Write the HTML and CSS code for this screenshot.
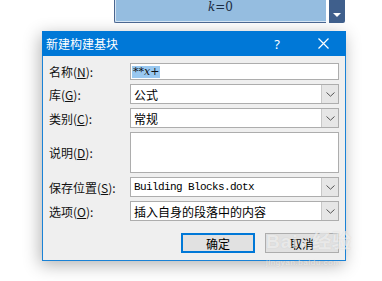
FILE: index.html
```html
<!DOCTYPE html>
<html lang="zh-CN">
<head>
    <meta charset="UTF-8">
    <meta name="viewport" content="width=device-width, initial-scale=1.0">
    <title>新建构建基块</title>
    <link rel="stylesheet" href="styles.css">
</head>
<body>
    <div class="eq">
        <div class="eq-body"><span class="eq-text"><i>k</i>=0</span></div>
        <div class="eq-btn"><span class="tri"></span></div>
    </div>

    <div class="dialog">
        <div class="title-bar">
            <span class="title">新建构建基块</span>
            <span class="title-btn help">?</span>
            <span class="title-btn close">
                <svg width="11" height="11" viewBox="0 0 11 11"><path d="M0.5 0.5L10.5 10.5M10.5 0.5L0.5 10.5" stroke="#fff" stroke-width="1.2" fill="none"/></svg>
            </span>
        </div>
        <div class="dialog-body">
            <div class="form">
                <label class="label">名称(<u>N</u>):</label>
                <div class="field text-field row-short"><span class="sel">**<i>x</i>+</span></div>

                <label class="label">库(<u>G</u>):</label>
                <div class="field combo"><span class="val">公式</span><span class="arrow"><svg width="9" height="5" viewBox="0 0 9 5"><path d="M0.5 0.5L4.5 4.2L8.5 0.5" stroke="#555" fill="none"/></svg></span></div>

                <label class="label">类别(<u>C</u>):</label>
                <div class="field combo"><span class="val">常规</span><span class="arrow"><svg width="9" height="5" viewBox="0 0 9 5"><path d="M0.5 0.5L4.5 4.2L8.5 0.5" stroke="#555" fill="none"/></svg></span></div>

                <label class="label">说明(<u>D</u>):</label>
                <div class="field text-field row-tall"></div>

                <label class="label">保存位置(<u>S</u>):</label>
                <div class="field combo"><span class="val mono">Building Blocks.dotx</span><span class="arrow"><svg width="9" height="5" viewBox="0 0 9 5"><path d="M0.5 0.5L4.5 4.2L8.5 0.5" stroke="#555" fill="none"/></svg></span></div>

                <label class="label">选项(<u>O</u>):</label>
                <div class="field combo"><span class="val">插入自身的段落中的内容</span><span class="arrow"><svg width="9" height="5" viewBox="0 0 9 5"><path d="M0.5 0.5L4.5 4.2L8.5 0.5" stroke="#555" fill="none"/></svg></span></div>
            </div>
            <div class="buttons">
                <button class="btn default">确定</button>
                <button class="btn">取消</button>
            </div>
        </div>
    </div>

    <div class="watermark">
        <span class="wm-logo">Bai<span class="paw">●</span>经验</span>
        <span class="wm-url">jingyan.baidu.com</span>
    </div>
</body>
</html>
```

FILE: styles.css
```css
/* Word "new building block" dialog */
body {
    margin: 0;
    width: 382px;
    height: 281px;
    overflow: hidden;
    background-color: #fff;
    font-family: "Noto Sans CJK SC", "Noto Sans", sans-serif;
    font-size: 12px;
    color: #000;
    position: relative;
}
.eq {
    display: flex;
    margin-left: 114px;
    width: 231px;
    height: 23px;
}
.eq-body {
    flex: 1;
    display: flex;
    justify-content: center;
    background-color: #95bde0;
    border-left: 1px solid #4a6690;
    border-bottom: 1px solid #4a6690;
    border-bottom-left-radius: 2px;
    box-shadow: inset 1px -1px 0 #d6e5f3;
}
.eq-text {
    font-family: "DejaVu Serif", "Liberation Serif", serif;
    font-size: 12px;
    line-height: 14px;
    color: #1c2c44;
}
.eq-btn {
    width: 16px;
    margin-left: 3px;
    background-color: #3f5f8c;
    border-bottom-right-radius: 2px;
    display: flex;
    justify-content: center;
    align-items: flex-end;
    padding-bottom: 6px;
    box-sizing: border-box;
}
.tri {
    width: 0;
    height: 0;
    border-left: 4px solid transparent;
    border-right: 4px solid transparent;
    border-top: 4px solid #fff;
}
.dialog {
    margin: 8px 0 0 42px;
    width: 304px;
    height: 230px;
    display: flex;
    flex-direction: column;
    box-shadow: -2px 4px 16px rgba(0,0,0,0.3);
}
.title-bar {
    height: 25px;
    background-color: #0078d7;
    color: #fff;
    display: flex;
    align-items: center;
    padding-left: 4px;
}
.title {
    flex: 1;
    font-size: 12px;
}
.title-btn {
    width: 46px;
    height: 25px;
    display: flex;
    justify-content: center;
    align-items: center;
}
.help {
    font-family: "Noto Sans", sans-serif;
    font-size: 13px;
}
.dialog-body {
    flex: 1;
    background-color: #efefef;
    border: 1px solid #1a82d6;
    border-top: none;
    padding: 7px 6px 0 6px;
}
.form {
    display: grid;
    grid-template-columns: 81px 1fr;
    row-gap: 4px;
    align-items: center;
}
.label {
    font-size: 12px;
    color: #111;
    white-space: nowrap;
}
.label u {
    text-underline-offset: 1px;
}
.field {
    box-sizing: border-box;
    height: 20px;
    border: 1px solid #adadad;
    background-color: #fff;
    display: flex;
    align-items: center;
}
.row-short {
    height: 17px;
}
.row-tall {
    height: 41px;
}
.text-field {
    padding-left: 1px;
}
.sel {
    background-color: #99c8f0;
    font-family: "DejaVu Serif", "Liberation Serif", serif;
    font-size: 11px;
    line-height: 12px;
    padding: 0 1px;
    color: #111;
}
.val {
    flex: 1;
    padding-left: 3px;
    white-space: nowrap;
    overflow: hidden;
}
.mono {
    font-family: "Liberation Mono", monospace;
    font-size: 11px;
    letter-spacing: -0.6px;
}
.arrow {
    width: 17px;
    height: 18px;
    box-sizing: border-box;
    background-color: #e6e6e6;
    border-left: 1px solid #c8c8c8;
    display: flex;
    justify-content: center;
    align-items: center;
}
.buttons {
    display: flex;
    justify-content: flex-end;
    gap: 10px;
    margin-top: 12px;
}
.btn {
    width: 74px;
    height: 20px;
    box-sizing: border-box;
    background-color: #e1e1e1;
    border: 1px solid #adadad;
    font-family: "Noto Sans CJK SC", sans-serif;
    font-size: 12px;
    padding: 0;
    color: #000;
}
.btn.default {
    border: 2px solid #0078d7;
}
/* faint site watermark over the corner */
.watermark {
    position: absolute;
    left: 266px;
    top: 231px;
    display: flex;
    flex-direction: column;
    color: rgba(255,255,255,0.6);
    text-shadow: 0 0 1px rgba(140,140,140,0.3);
    pointer-events: none;
}
.wm-logo {
    font-family: "Liberation Sans", sans-serif;
    font-size: 19px;
    font-weight: bold;
    line-height: 22px;
    letter-spacing: 1px;
}
.paw {
    font-size: 11px;
    margin: 0 4px 0 2px;
}
.wm-url {
    font-family: "Liberation Sans", sans-serif;
    font-size: 8px;
    line-height: 10px;
    letter-spacing: 0.6px;
    margin-top: 3px;
}
```
